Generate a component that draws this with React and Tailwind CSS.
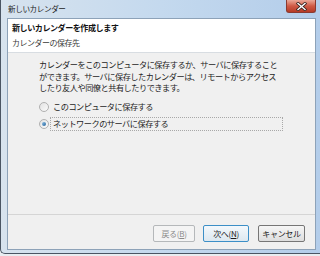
// New calendar wizard dialog (Windows 7 Aero look)
const FONT = { fontFamily: '"Noto Sans CJK JP", "Noto Sans", sans-serif' };

function CloseButton() {
  return (
    <div className="w-[30px] h-[13px] rounded-b-[3px] border border-t-0 border-[#8a3a30] bg-gradient-to-b from-[#eaa898] via-[#cf5a45] to-[#b63a25] flex items-center justify-center">
      <svg width="11" height="9" viewBox="0 0 11 9">
        <path d="M2 1.5 L9 7.5 M9 1.5 L2 7.5" stroke="#3a2520" strokeWidth="3" strokeLinecap="square" />
        <path d="M2 1.5 L9 7.5 M9 1.5 L2 7.5" stroke="#ffffff" strokeWidth="1.4" strokeLinecap="square" />
      </svg>
    </div>
  );
}

function Radio({ checked }) {
  return (
    <span className="w-[10px] h-[10px] rounded-full border border-[#b0b0b0] bg-gradient-to-br from-[#e2e2e2] to-[#fbfbfb] flex items-center justify-center shrink-0">
      {checked && <span className="w-[4px] h-[4px] rounded-full bg-gradient-to-br from-[#8cc0e6] to-[#23639a]" />}
    </span>
  );
}

function WizButton({ children, variant }) {
  const cls =
    variant === 'disabled'
      ? 'border-[#b5b8ba] bg-[#f4f4f4] text-[#8b8b8b]'
      : variant === 'default'
      ? 'border-[#3c8fc7] bg-gradient-to-b from-[#f3f8fc] to-[#dde8f0] text-[#1a1a1a]'
      : 'border-[#767676] bg-gradient-to-b from-[#f6f6f6] to-[#dedede] text-[#1a1a1a]';
  return (
    <div className={`h-[17px] rounded-[2px] border flex items-center justify-center text-[8px] tracking-[-0.3px] ${cls}`}>
      {children}
    </div>
  );
}

export default function App() {
  return (
    <div className="w-[320px] h-[256px] overflow-hidden bg-[#e9edf1]" style={FONT}>
      <div className="h-[254px] flex flex-col pl-[6px] pr-[4px] pb-[3px] border-l border-b border-[#4a5563] rounded-bl-[5px] bg-gradient-to-r from-[#d7e3ee] via-[#c4d9ee] to-[#b3cdea]">
        {/* title bar */}
        <div className="h-[18px] flex items-start justify-between">
          <span className="text-[7.6px] tracking-[-0.4px] leading-[18px] text-[#1c1c1c] pl-[1px]">新しいカレンダー</span>
          <CloseButton />
        </div>

        {/* client area */}
        <div className="flex-1 flex flex-col border border-[#8da2b8] bg-[#f0f0f0]">
          <div className="h-[34px] bg-white border-b border-[#d8dde2] pl-[4px] pt-[1px] leading-[15px]">
            <div className="text-[8.1px] tracking-[-0.5px] font-bold text-[#111]">新しいカレンダーを作成します</div>
            <div className="text-[8px] tracking-[-0.5px] text-[#3a3a3a]">カレンダーの保存先</div>
          </div>

          <div className="flex-1 pl-[31px] pt-[6px] text-[8.2px] tracking-[-0.5px] text-[#1e1e1e]">
            <p className="leading-[11.5px]">
              カレンダーをこのコンピュータに保存するか、サーバに保存すること
              <br />
              ができます。サーバに保存したカレンダーは、リモートからアクセス
              <br />
              したり友人や同僚と共有したりできます。
            </p>
            <div className="mt-[6px] flex flex-col gap-[3px]">
              <div className="flex items-center gap-[1px]">
                <Radio />
                <span className="h-[14px] flex items-center border border-transparent pl-[2px]">このコンピュータに保存する</span>
              </div>
              <div className="flex items-center gap-[1px]">
                <Radio checked />
                <span className="h-[14px] w-[233px] flex items-center border border-dotted border-[#a8a8a8] pl-[2px]">ネットワークのサーバに保存する</span>
              </div>
            </div>
          </div>

          <div className="h-[35px] border-t border-[#d5d5d5] pt-[10px] pr-[10px] flex justify-end items-start">
            <div className="w-[42px]">
              <WizButton variant="disabled">
                戻る(<span className="underline">B</span>)
              </WizButton>
            </div>
            <div className="w-[46px] ml-[8px]">
              <WizButton variant="default">
                次へ(<span className="underline">N</span>)
              </WizButton>
            </div>
            <div className="w-[47px] ml-[9px]">
              <WizButton>キャンセル</WizButton>
            </div>
          </div>
        </div>
      </div>
    </div>
  );
}
